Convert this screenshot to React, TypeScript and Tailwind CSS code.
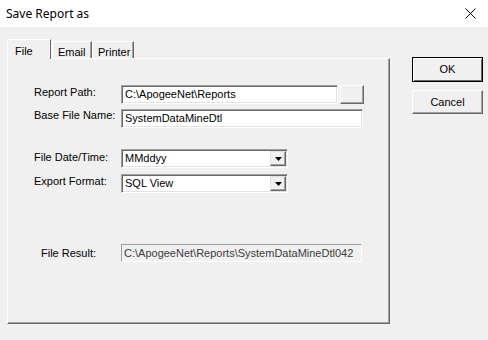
import React from "react";

const font = { fontFamily: '"Liberation Sans", Arial, sans-serif' };

const Sunken: React.FC<{ w: string; children?: React.ReactNode }> = ({ w, children }) => (
  <div className={`${w} h-[19px] border-t border-l border-t-[#a0a0a0] border-l-[#a0a0a0] border-b border-r border-b-white border-r-white shadow-[inset_1px_1px_#696969,inset_-1px_-1px_#e3e3e3] bg-white flex items-center pl-[3px] text-[11px] text-black overflow-hidden whitespace-nowrap`}>
    {children}
  </div>
);

const Combo: React.FC<{ value: string }> = ({ value }) => (
  <div className="w-[167px] h-[19px] border-t border-l border-t-[#a0a0a0] border-l-[#a0a0a0] border-b border-r border-b-white border-r-white shadow-[inset_1px_1px_#696969,inset_-1px_-1px_#e3e3e3] bg-white flex items-center text-[11px] text-black">
    <span className="flex-1 pl-[3px]">{value}</span>
    <div className="w-[16px] h-[15px] mr-[1px] bg-[#f0f0f0] border-t border-l border-t-[#e3e3e3] border-l-[#e3e3e3] border-b border-r border-b-[#696969] border-r-[#696969] shadow-[inset_-1px_-1px_#a0a0a0] flex items-center justify-center">
      <svg width="7" height="4" viewBox="0 0 7 4">
        <path d="M0 0h7L3.5 4z" fill="#000" />
      </svg>
    </div>
  </div>
);

const Label: React.FC<{ children: React.ReactNode }> = ({ children }) => (
  <div className="w-[87px] text-[11px] text-black leading-[13px]">{children}</div>
);

const App: React.FC = () => {
  return (
    <div className="w-[488px] h-[340px] bg-[#f0f0f0] flex flex-col select-none" style={font}>
      <div className="h-[27px] bg-white flex items-center justify-between pl-[6px] pr-[12px]">
        <span className="text-[12px] text-black" style={{ fontFamily: '"Noto Sans", "Liberation Sans", sans-serif' }}>
          Save Report as
        </span>
        <svg width="11" height="11" viewBox="0 0 11 11">
          <path d="M0.5 0.5L10.5 10.5M10.5 0.5L0.5 10.5" stroke="#000" strokeWidth="1" />
        </svg>
      </div>

      <div className="flex flex-1">
        <div className="pl-[7px] pt-[11px] flex flex-col">
          <div className="flex items-end h-[20px] text-[11px] text-black">
            <div className="w-[44px] h-[20px] pl-[7px] pt-[3px] bg-[#f0f0f0] border-t border-l border-t-white border-l-white border-r border-r-[#696969] relative z-10 -mb-[1px]">
              File
            </div>
            <div className="ml-[1px] w-[40px] h-[17px] pl-[5px] pt-[2px] border-t border-l border-t-white border-l-white border-r border-r-[#696969] shadow-[inset_-1px_0_#a0a0a0]">
              Email
            </div>
            <div className="w-[42px] h-[17px] pl-[5px] pt-[2px] border-t border-l border-t-white border-l-white border-r border-r-[#696969] shadow-[inset_-1px_0_#a0a0a0]">
              Printer
            </div>
          </div>
          <div className="w-[383px] h-[266px] border-t border-l border-t-white border-l-white border-b border-r border-b-[#696969] border-r-[#696969] shadow-[inset_-1px_-1px_#a0a0a0] pl-[26px] pt-[26px] flex flex-col">
            <div className="flex">
              <Label>
                <div className="pt-[1px]">Report Path:</div>
              </Label>
              <Sunken w="w-[217px]">C:\ApogeeNet\Reports</Sunken>
              <div className="ml-[2px] w-[24px] h-[19px] bg-[#f0f0f0] border-t border-l border-t-white border-l-white border-b border-r border-b-[#696969] border-r-[#696969] shadow-[inset_-1px_-1px_#a0a0a0]" />
            </div>
            <div className="flex mt-[5px]">
              <Label>
                <div className="pt-[0px]">Base File Name:</div>
              </Label>
              <Sunken w="w-[242px]">SystemDataMineDtl</Sunken>
            </div>
            <div className="flex mt-[21px]">
              <Label>
                <div className="pt-[2px]">File Date/Time:</div>
              </Label>
              <Combo value="MMddyy" />
            </div>
            <div className="flex mt-[6px]">
              <Label>
                <div className="pt-[1px]">Export Format:</div>
              </Label>
              <Combo value="SQL View" />
            </div>
            <div className="flex mt-[51px] items-center">
              <Label>
                <div className="pl-[7px]">File Result:</div>
              </Label>
              <div className="w-[241px] h-[18px] border-t border-l border-t-[#a0a0a0] border-l-[#a0a0a0] border-b border-r border-b-white border-r-white bg-[#f0f0f0] flex items-center pl-[2px] text-[11px] text-[#3c3c3c] whitespace-nowrap overflow-hidden">
                C:\ApogeeNet\Reports\SystemDataMineDtl042
              </div>
            </div>
          </div>
        </div>

        <div className="ml-[22px] pt-[30px] flex flex-col gap-[8px]">
          <div className="w-[71px] h-[25px] border border-black bg-[#f0f0f0] shadow-[inset_1px_1px_white,inset_-1px_-1px_#696969] flex items-center justify-center text-[11px] text-black">
            OK
          </div>
          <div className="w-[71px] h-[24px] border-t border-l border-t-white border-l-white border-b border-r border-b-[#696969] border-r-[#696969] shadow-[inset_-1px_-1px_#a0a0a0] bg-[#f0f0f0] flex items-center justify-center text-[11px] text-black">
            Cancel
          </div>
        </div>
      </div>
    </div>
  );
};

export default App;
